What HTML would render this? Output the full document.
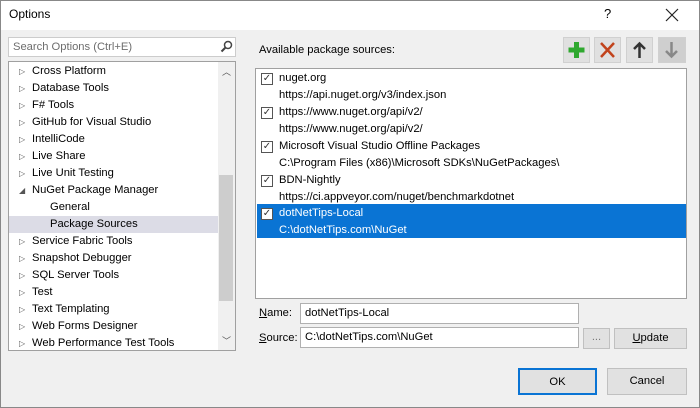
<!DOCTYPE html><html><head><style>
*{box-sizing:border-box}
body{margin:0;width:700px;height:408px;overflow:hidden;font-family:"Liberation Sans",sans-serif;font-size:11.2px;color:#000;background:#f0f0f0;position:relative}
.a{position:absolute}
.title{left:0;top:0;width:700px;height:30px;background:#fff;border:1px solid #888;border-bottom:none}
.frame{left:0;top:0;width:700px;height:408px;border:1px solid #888;pointer-events:none}
.tree{left:8px;top:61px;width:228px;height:290px;background:#fff;border:1px solid #a0a0a0}
.ti{position:absolute;left:0;height:17px;line-height:17px;width:209px}
.ti span.t{position:absolute;left:23px}
.ti span.c{position:absolute;left:10px;font-size:8px;color:#555}
.list{left:255px;top:68px;width:432px;height:231px;background:#fff;border:1px solid #a0a0a0}
.row{position:absolute;left:1px;width:429px;height:34px;line-height:17px}
.row .cb{position:absolute;left:4px;top:3px;width:12px;height:12px;border:1px solid #555;background:#fff;font-size:10px;line-height:10px;text-align:center;color:#333}
.row .l1{position:absolute;left:22px;top:0}
.row .l2{position:absolute;left:22px;top:17px}
.inp{background:#fff;border:1px solid #b0b0b0;height:21px;line-height:19px;padding-left:4px}
.btn{background:#e1e1e1;border:1px solid #c0c0c0;text-align:center;line-height:25px}
.tb{top:37px;width:27px;height:26px;background:#e0e0e0;border:1px solid #d0d0d0}
</style></head><body>
<div class="a title"></div>
<div class="a" style="left:9px;top:7px;font-size:12px">Options</div>
<div class="a" style="left:604px;top:6px;font-size:13px">?</div>
<svg class="a" style="left:665px;top:8px" width="14" height="14"><path d="M1 1L13 13M13 1L1 13" stroke="#222" stroke-width="1.2"/></svg>
<div class="a inp" style="left:8px;top:37px;width:228px;height:20px;line-height:18px;color:#6d6d6d;border-color:#ccc">Search Options (Ctrl+E)</div>
<svg class="a" style="left:220px;top:40px" width="13" height="13"><circle cx="8" cy="5" r="3.5" fill="none" stroke="#444" stroke-width="1.5"/><line x1="5.5" y1="7.5" x2="1.5" y2="11.5" stroke="#444" stroke-width="2"/></svg>
<div class="a tree">
<div class="a" style="left:209px;top:0;width:17px;height:288px;background:#f0f0f0"></div>
<div class="a" style="left:210px;top:113px;width:14px;height:126px;background:#cdcdcd"></div>
<div class="a" style="left:213px;top:3px;font-size:9px;color:#555">︿</div>
<div class="a" style="left:213px;top:272px;font-size:9px;color:#555">﹀</div>
<div class="ti" style="top:1px"><span class="c">▷</span><span class="t">Cross Platform</span></div>
<div class="ti" style="top:18px"><span class="c">▷</span><span class="t">Database Tools</span></div>
<div class="ti" style="top:35px"><span class="c">▷</span><span class="t">F# Tools</span></div>
<div class="ti" style="top:52px"><span class="c">▷</span><span class="t">GitHub for Visual Studio</span></div>
<div class="ti" style="top:69px"><span class="c">▷</span><span class="t">IntelliCode</span></div>
<div class="ti" style="top:86px"><span class="c">▷</span><span class="t">Live Share</span></div>
<div class="ti" style="top:103px"><span class="c">▷</span><span class="t">Live Unit Testing</span></div>
<div class="ti" style="top:120px"><span class="c">◢</span><span class="t">NuGet Package Manager</span></div>
<div class="ti" style="top:137px"><span class="t" style="left:41px">General</span></div>
<div class="ti" style="top:154px;background:#dcdce6"><span class="t" style="left:41px">Package Sources</span></div>
<div class="ti" style="top:171px"><span class="c">▷</span><span class="t">Service Fabric Tools</span></div>
<div class="ti" style="top:188px"><span class="c">▷</span><span class="t">Snapshot Debugger</span></div>
<div class="ti" style="top:205px"><span class="c">▷</span><span class="t">SQL Server Tools</span></div>
<div class="ti" style="top:222px"><span class="c">▷</span><span class="t">Test</span></div>
<div class="ti" style="top:239px"><span class="c">▷</span><span class="t">Text Templating</span></div>
<div class="ti" style="top:256px"><span class="c">▷</span><span class="t">Web Forms Designer</span></div>
<div class="ti" style="top:273px"><span class="c">▷</span><span class="t">Web Performance Test Tools</span></div>
</div>
<div class="a" style="left:259px;top:44px">Available package sources:</div>
<div class="a tb" style="left:563px"><svg width="25" height="24"><path d="M12.5 4v16M4.5 12h16" stroke="#2fa82f" stroke-width="5"/></svg></div>
<div class="a tb" style="left:594px"><svg width="25" height="24"><path d="M6 5l13 14M19 5L6 19" stroke="#c1431c" stroke-width="2.5"/></svg></div>
<div class="a tb" style="left:626px"><svg width="25" height="24"><path d="M12.5 20V6M7 11l5.5-5.5L18 11" stroke="#333" stroke-width="2.5" fill="none"/></svg></div>
<div class="a tb" style="left:658px;width:28px;background:#cfcfcf"><svg width="25" height="24"><path d="M12.5 4v14M7 13l5.5 5.5L18 13" stroke="#888" stroke-width="2.5" fill="none"/></svg></div>
<div class="a list">
<div class="row" style="top:1px"><div class="cb">✓</div><div class="l1">nuget.org</div><div class="l2">https://api.nuget.org/v3/index.json</div></div>
<div class="row" style="top:35px"><div class="cb">✓</div><div class="l1">https://www.nuget.org/api/v2/</div><div class="l2">https://www.nuget.org/api/v2/</div></div>
<div class="row" style="top:69px"><div class="cb">✓</div><div class="l1">Microsoft Visual Studio Offline Packages</div><div class="l2">C:\Program Files (x86)\Microsoft SDKs\NuGetPackages\</div></div>
<div class="row" style="top:103px"><div class="cb">✓</div><div class="l1">BDN-Nightly</div><div class="l2">https://ci.appveyor.com/nuget/benchmarkdotnet</div></div>
<div class="row" style="top:135px;background:#0a74d4;color:#fff"><div class="cb" style="top:4px">✓</div><div class="l1" style="top:1px">dotNetTips-Local</div><div class="l2" style="top:18px">C:\dotNetTips.com\NuGet</div></div>
</div>
<div class="a" style="left:259px;top:307px"><u>N</u>ame:</div>
<div class="a inp" style="left:300px;top:303px;width:279px">dotNetTips-Local</div>
<div class="a" style="left:259px;top:332px"><u>S</u>ource:</div>
<div class="a inp" style="left:300px;top:327px;width:279px">C:\dotNetTips.com\NuGet</div>
<div class="a btn" style="left:583px;top:328px;width:27px;height:21px;line-height:17px;color:#777">...</div>
<div class="a btn" style="left:614px;top:328px;width:73px;height:21px;line-height:19px"><u>U</u>pdate</div>
<div class="a btn" style="left:518px;top:368px;width:79px;height:27px;border:2px solid #0a74d4">OK</div>
<div class="a btn" style="left:607px;top:368px;width:80px;height:27px">Cancel</div>
<div class="a frame"></div>
</body></html>
